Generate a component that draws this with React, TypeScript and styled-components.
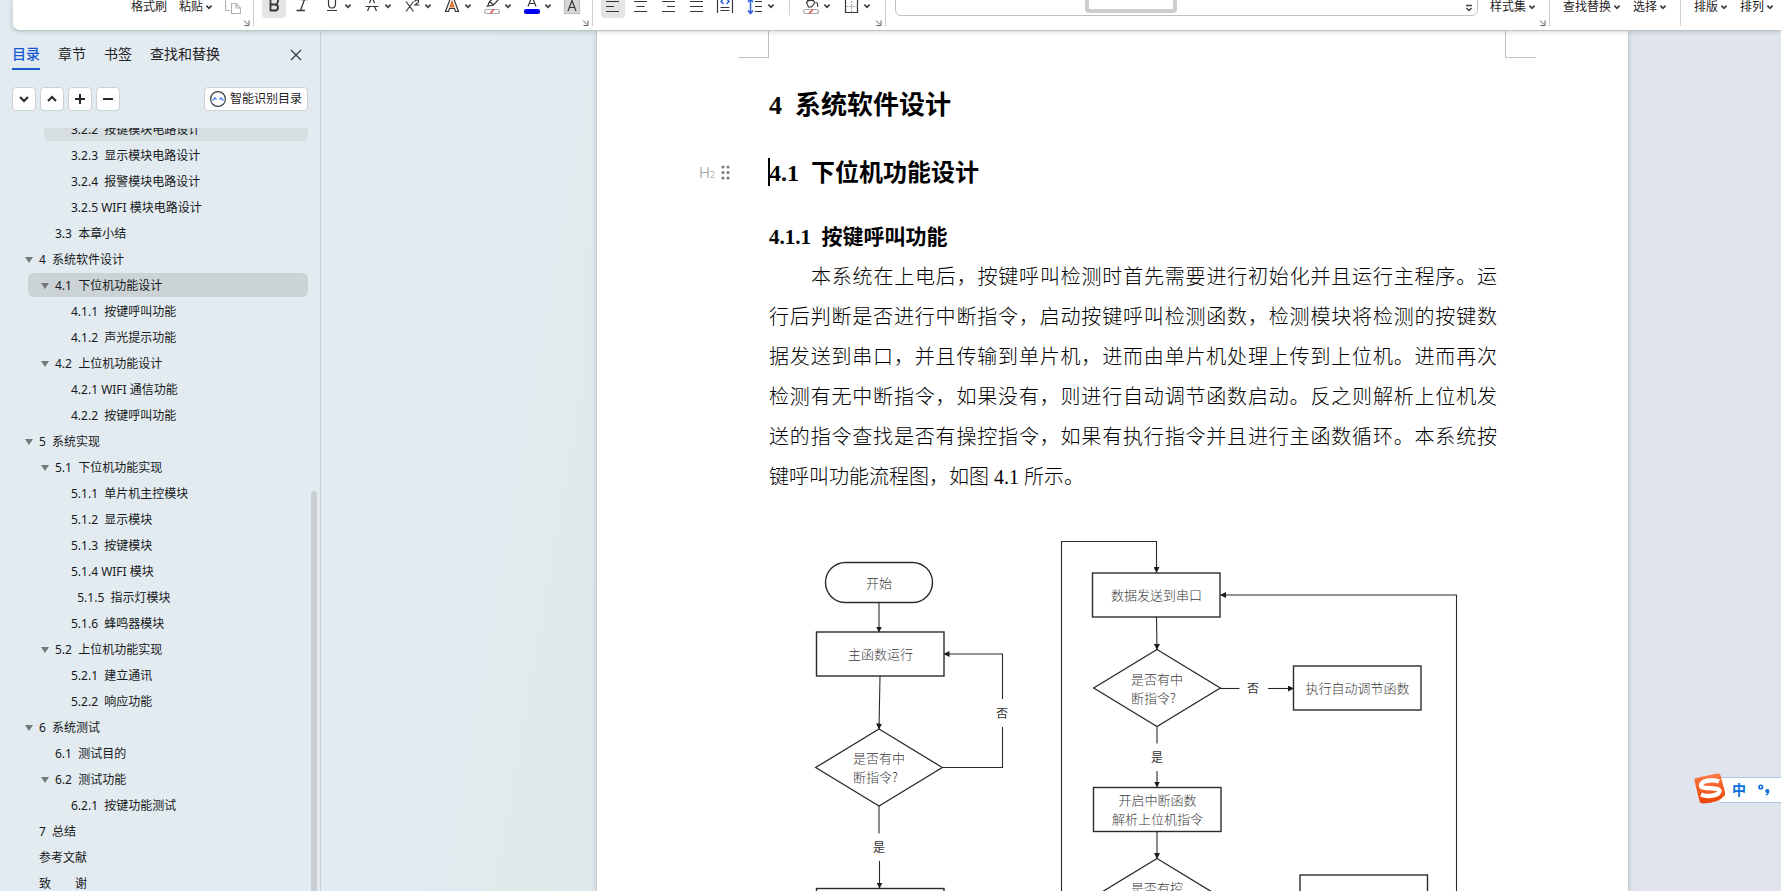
import React from "react";
import styled, { createGlobalStyle } from "styled-components";

const uiFont = `"Noto Sans", "Noto Sans CJK SC", sans-serif`;
const docFont = `"Liberation Serif", "Noto Sans CJK SC", serif`;

const GlobalStyle = createGlobalStyle`
  * { box-sizing: border-box; }
  body { margin: 0; overflow: hidden; }
  button { font-family: inherit; padding: 0; border: 0; background: none; color: inherit; }
`;

const Shell = styled.div`
  display: flex;
  flex-direction: column;
  height: 100vh;
  overflow: hidden;
  position: relative;
  font-family: ${uiFont};
  font-size: 12px;
  color: #1f2224;
  background: linear-gradient(100deg, #e2ebf0 0%, #e3ebf1 26%, #e0e9ec 34%, #e0e5ed 60%);
`;

/* ---------- ribbon ---------- */

const Ribbon = styled.header`
  display: flex;
  flex: none;
  height: 31px;
  margin-left: 12px;
  background: #fff;
  border-bottom: 1px solid #bcc5c9;
  border-left: 1px solid #d5dddf;
  border-bottom-left-radius: 8px;
  box-shadow: 0 1px 4px rgba(70, 90, 100, 0.25);
  position: relative;
  z-index: 2;
`;

const Group = styled.div<{ $left?: number; $right?: number; $grow?: boolean; $last?: boolean }>`
  display: flex;
  flex: ${(p) => (p.$grow ? "1" : "none")};
  height: 26px;
  position: relative;
  padding-left: ${(p) => p.$left ?? 8}px;
  padding-right: ${(p) => p.$right ?? 13}px;
  border-right: ${(p) => (p.$last ? "0" : "1px solid #cfd1d3")};
`;

const ToolRow = styled.div<{ $gap: number }>`
  display: flex;
  height: 25px;
  margin-top: -7px;
  gap: ${(p) => p.$gap}px;
`;

const ToolPair = styled.div<{ $gap: number }>`
  display: flex;
  gap: ${(p) => p.$gap}px;
`;

const Tool = styled.button<{ $on?: boolean }>`
  display: flex;
  align-items: center;
  height: 25px;
  border-radius: 4px;
  background: ${(p) => (p.$on ? "#e4e4e4" : "transparent")};
`;

const TextTool = styled(Tool)`
  gap: 2px;
  padding-top: 2px;
  font-size: 12px;
  line-height: 12px;
  white-space: nowrap;
`;

const Divider = styled.span`
  width: 1px;
  height: 22px;
  margin: 0 5px 0 10px;
  background: #cfd1d3;
`;

const LauncherButton = styled.button`
  position: absolute;
  right: 3px;
  bottom: 0;
  width: 7px;
  height: 6px;
  display: flex;
`;

const Gallery = styled.div`
  display: flex;
  flex: 1;
  height: 23px;
  margin: -7px 12px 0 0;
  padding: 0 4px 0 189px;
  justify-content: space-between;
  border: 1px solid #bfc2c4;
  border-radius: 0 0 6px 6px;
`;

const StyleCard = styled.button`
  width: 92px;
  height: 19px;
  border: 4px solid #cdcdcd;
  border-radius: 4px;
`;

const Icon = ({ children, w = 24 }: { children: React.ReactNode; w?: number }) => (
  <svg width={w} height={25} viewBox={`0 0 ${w} 25`} fill="none" stroke="#33373a" strokeWidth="1.2">
    {children}
  </svg>
);

const Chevron = () => (
  <svg width="8" height="25" viewBox="0 0 8 25" fill="none" stroke="#3c4043" strokeWidth="1.8">
    <path d="M1.4 11.7 4 14.3 6.6 11.7" />
  </svg>
);

const Launcher = ({ label }: { label: string }) => (
  <LauncherButton aria-label={label}>
    <svg width="7" height="6" viewBox="0 0 7 6" fill="none" stroke="#5d6164">
      <path d="M1 0.5 5 4.5M6 0.5V5.5H1.5" />
    </svg>
  </LauncherButton>
);

const Capsule = () => (
  <>
    <rect x="4.5" y="16.5" width="15" height="4" rx="2" stroke="#a9acae" fill="#fff" />
    <path d="M10 20.5 14 16.5" stroke="#e0433b" />
  </>
);

const fontTools: { label: string; icon: React.ReactNode }[] = [
  { label: "下划线", icon: <path d="M8.5 3v8.5a3.5 3.5 0 0 0 7 0V3M7 17.5h10" /> },
  { label: "删除线", icon: <path d="M5.5 13.5h13M9.5 10 12 3.5 14.5 10M9.5 13.5 7.5 18M14.5 13.5 16.5 18" /> },
  { label: "上标", icon: <path d="M6 8.5 13.500 18.500M13.500 8.500 6 18.500M15 8.500c.5-2.500 4-2 3.500 .3-.4 1.400-2.500 2.200-3.500 3.200h4.500" /> },
  {
    label: "文字效果",
    icon: (
      <>
        <path d="M5.5 18.5 10.5 5h3L18.5 18.5h-3L14.5 15.5h-5L8.5 18.5Z" />
        <path d="M12 8.5 10 14h4Z" fill="#f08a4b" stroke="#d9662a" />
      </>
    ),
  },
  {
    label: "突出显示",
    icon: (
      <>
        <path d="M7.500 13.500 9.500 8.500 14 5M9.500 8.500 13.500 12 18.500 6.500M6.500 13.500 13.500 12" />
        <Capsule />
      </>
    ),
  },
  {
    label: "字体颜色",
    icon: (
      <>
        <path d="M8 13.5 12 3.5 16 13.5M9 10.5h6" />
        <rect x="4" y="16" width="16" height="5" rx="2" fill="#0000f5" stroke="none" />
      </>
    ),
  },
];

const alignTools: { label: string; d: string; on?: boolean }[] = [
  { label: "左对齐", d: "M5 8.5h13M5 13.5h8M5 18.5h13", on: true },
  { label: "居中", d: "M5 8.5h13M7.5 13.5h8M5 18.5h13" },
  { label: "右对齐", d: "M5 8.5h13M10 13.5h8M5 18.5h13" },
  { label: "两端对齐", d: "M5 8.5h13M5 13.5h13M5 18.5h13" },
];

const TopBar = () => (
  <Ribbon>
    <Group $left={118} $right={12}>
      <ToolRow $gap={12}>
        <TextTool>格式刷</TextTool>
        <TextTool>
          粘贴
          <Chevron />
        </TextTool>
        <Tool aria-label="复制">
          <Icon w={16}>
            <g stroke="#b1b4b6">
              <path d="M5 17.5H.5V5M6 10.5h5l4.5 4.5v5.5H6.5V10.5M11 10.5V15h4.5" />
            </g>
          </Icon>
        </Tool>
      </ToolRow>
      <Launcher label="剪贴板选项" />
    </Group>

    <Group $right={8}>
      <ToolRow $gap={6}>
        <ToolPair $gap={4}>
          <Tool $on aria-label="加粗">
            <Icon>
              <path d="M8.500 4.500h4a3 3 0 0 1 0 7h-4ZM8.500 11.500h4.500a3 3 0 0 1 0 6h-4.500Z" strokeWidth="1.800" />
            </Icon>
          </Tool>
          <Tool aria-label="倾斜">
            <Icon>
              <path d="M10.5 6.5H18M6.5 17.5H15M14.5 6.5 10.5 17.5" strokeWidth="1.3" />
            </Icon>
          </Tool>
        </ToolPair>
        <ToolPair $gap={8}>
          {fontTools.map((t) => (
            <Tool key={t.label} aria-label={t.label}>
              <Icon>{t.icon}</Icon>
              <Chevron />
            </Tool>
          ))}
          <Tool aria-label="字符底纹">
            <Icon>
              <rect x="4.5" y="2.5" width="15" height="18" fill="#d6d6d6" stroke="#bdbdbd" />
              <path d="M8 18 12 7.5 16 18M9.5 14.500h5" />
            </Icon>
          </Tool>
        </ToolPair>
      </ToolRow>
      <Launcher label="字体选项" />
    </Group>

    <Group $right={14}>
      <ToolRow $gap={4}>
        {alignTools.map((t) => (
          <Tool key={t.label} $on={t.on} aria-label={t.label}>
            <Icon>
              <path d={t.d} />
            </Icon>
          </Tool>
        ))}
        <Tool aria-label="分散对齐">
          <Icon>
            <path d="M4.5 5v15M19.5 5v15M7.5 14.5h9M7.5 17.5h9" />
            <path d="M10.500 5.500 8 8.500 10.500 11M13.500 5.500 16 8.500 13.500 11" stroke="#2d5fe0" strokeWidth="1.5" />
          </Icon>
        </Tool>
        <Tool aria-label="行距">
          <Icon w={26}>
            <path d="M14 8.5h7M14 13.5h7M14 18.5h7" />
            <path d="M9.5 5v15M7 17.5 9.5 20.5 12 17.5M7 9 9.5 6 12 9" stroke="#2d5fe0" strokeWidth="1.5" />
          </Icon>
          <Chevron />
        </Tool>
        <Divider />
        <ToolPair $gap={8}>
          <Tool aria-label="底纹颜色">
            <Icon>
              <path d="M7.500 9.500 12 5.500 16 9.500 12.500 14H9.500ZM8 7.500h7M17.500 9c1.500 2 1.500 4.500 .5 4.500" />
              <Capsule />
            </Icon>
            <Chevron />
          </Tool>
          <Tool aria-label="边框">
            <Icon>
              <path d="M6.500 6.500h12v13h-12Z" />
              <path d="M12.500 8v11M7.500 13.500h11" stroke="#a5a8aa" strokeDasharray="2 1" />
            </Icon>
            <Chevron />
          </Tool>
        </ToolPair>
      </ToolRow>
      <Launcher label="段落选项" />
    </Group>

    <Group $grow $left={9}>
      <Gallery>
        <StyleCard aria-label="当前样式" />
        <Tool aria-label="更多样式">
          <svg width="8" height="25" viewBox="0 0 8 25" fill="none" stroke="#3c4043" strokeWidth="1.4">
            <path d="M1 11.5h6M1.5 14 4 16.5 6.5 14" />
          </svg>
        </Tool>
      </Gallery>
      <ToolRow $gap={12}>
        <TextTool>
          样式集
          <Chevron />
        </TextTool>
      </ToolRow>
      <Launcher label="样式选项" />
    </Group>

    <Group $left={13}>
      <ToolRow $gap={12}>
        {["查找替换", "选择"].map((t) => (
          <TextTool key={t}>
            {t}
            <Chevron />
          </TextTool>
        ))}
      </ToolRow>
    </Group>

    <Group $left={13} $right={7} $last>
      <ToolRow $gap={12}>
        {["排版", "排列"].map((t) => (
          <TextTool key={t}>
            {t}
            <Chevron />
          </TextTool>
        ))}
      </ToolRow>
    </Group>
  </Ribbon>
);

/* ---------- outline panel ---------- */

const Workspace = styled.main`
  display: flex;
  flex: 1;
  min-height: 0;
`;

const Panel = styled.aside`
  display: flex;
  flex-direction: column;
  flex: none;
  width: 321px;
  border-right: 1px solid #c6cdd1;
`;

const TabBar = styled.div`
  display: flex;
  align-items: flex-start;
  gap: 18px;
  height: 56px;
  padding: 11px 18px 0 12px;
`;

const Tab = styled.button<{ $on?: boolean }>`
  height: 28px;
  display: flex;
  align-items: flex-start;
  font-size: 14px;
  line-height: 24px;
  color: ${(p) => (p.$on ? "#1859d1" : "#1f2224")};
  font-weight: ${(p) => (p.$on ? 500 : 400)};
  border-bottom: ${(p) => (p.$on ? "2px solid #1859d1" : "0")};
`;

const CloseButton = styled.button`
  display: flex;
  margin: 7px 0 0 auto;
`;

const Actions = styled.div`
  display: flex;
  gap: 4px;
  padding: 0 12px;
  height: 41px;
`;

const SquareButton = styled.button`
  display: flex;
  align-items: center;
  justify-content: center;
  width: 24px;
  height: 24px;
  background: #fff;
  border: 1px solid #c9d2d5;
  border-radius: 4px;
`;

const SmartButton = styled(SquareButton)`
  width: 104px;
  margin-left: auto;
  gap: 4px;
  font-size: 12px;
  line-height: 20px;
  white-space: nowrap;
`;

const ListArea = styled.nav`
  flex: 1;
  min-height: 0;
  overflow: hidden;
  position: relative;
`;

const List = styled.ul`
  list-style: none;
  margin: -11px 12px 0;
  padding: 0;
  display: flex;
  flex-direction: column;
  gap: 2px;
`;

const Entry = styled.a<{ $level: number; $tone?: string }>`
  display: flex;
  align-items: center;
  height: 24px;
  margin-left: ${(p) => p.$level * 16}px;
  padding-top: 2px;
  border-radius: 6px;
  background: ${(p) => p.$tone ?? "transparent"};
  color: #17191b;
  text-decoration: none;
  white-space: pre;
  line-height: 22px;
`;

const Marker = styled.span`
  display: flex;
  justify-content: center;
  width: 27px;
  padding-left: 6px;
`;

const Thumb = styled.div`
  position: absolute;
  top: 363px;
  bottom: -20px;
  right: 3px;
  width: 6px;
  border-radius: 3px;
  background: #c9cfd2;
`;

type Row = { level: number; text: string; open?: boolean; tone?: string };

const rows: Row[] = [
  { level: 2, text: "3.2.2  按键模块电路设计", tone: "#d6dee1" },
  { level: 2, text: "3.2.3  显示模块电路设计" },
  { level: 2, text: "3.2.4  报警模块电路设计" },
  { level: 2, text: "3.2.5 WIFI 模块电路设计" },
  { level: 1, text: "3.3  本章小结" },
  { level: 0, text: "4  系统软件设计", open: true },
  { level: 1, text: "4.1  下位机功能设计", open: true, tone: "#cbd3d6" },
  { level: 2, text: "4.1.1  按键呼叫功能" },
  { level: 2, text: "4.1.2  声光提示功能" },
  { level: 1, text: "4.2  上位机功能设计", open: true },
  { level: 2, text: "4.2.1 WIFI 通信功能" },
  { level: 2, text: "4.2.2  按键呼叫功能" },
  { level: 0, text: "5  系统实现", open: true },
  { level: 1, text: "5.1  下位机功能实现", open: true },
  { level: 2, text: "5.1.1  单片机主控模块" },
  { level: 2, text: "5.1.2  显示模块" },
  { level: 2, text: "5.1.3  按键模块" },
  { level: 2, text: "5.1.4 WIFI 模块" },
  { level: 2, text: "  5.1.5  指示灯模块" },
  { level: 2, text: "5.1.6  蜂鸣器模块" },
  { level: 1, text: "5.2  上位机功能实现", open: true },
  { level: 2, text: "5.2.1  建立通讯" },
  { level: 2, text: "5.2.2  响应功能" },
  { level: 0, text: "6  系统测试", open: true },
  { level: 1, text: "6.1  测试目的" },
  { level: 1, text: "6.2  测试功能", open: true },
  { level: 2, text: "6.2.1  按键功能测试" },
  { level: 0, text: "7  总结" },
  { level: 0, text: "参考文献" },
  { level: 0, text: "致　　谢" },
];

const actionIcons = [
  { label: "展开", d: "M3 5 7 9 11 5" },
  { label: "收起", d: "M3 9 7 5 11 9" },
  { label: "提升级别", d: "M7 2v10M2 7h10" },
  { label: "降低级别", d: "M2 7h10" },
];

const OutlinePanel = () => (
  <Panel>
    <TabBar>
      <Tab $on>目录</Tab>
      <Tab>章节</Tab>
      <Tab>书签</Tab>
      <Tab>查找和替换</Tab>
      <CloseButton aria-label="关闭">
        <svg width="12" height="12" viewBox="0 0 12 12" stroke="#33373a" strokeWidth="1.2">
          <path d="M1 1 11 11M11 1 1 11" />
        </svg>
      </CloseButton>
    </TabBar>
    <Actions>
      {actionIcons.map((a) => (
        <SquareButton key={a.label} aria-label={a.label}>
          <svg width="14" height="14" viewBox="0 0 14 14" fill="none" stroke="#25282a" strokeWidth="2">
            <path d={a.d} />
          </svg>
        </SquareButton>
      ))}
      <SmartButton>
        <svg width="16" height="16" viewBox="0 0 16 16" fill="none">
          <circle cx="8" cy="8" r="7.4" stroke="#3a3e42" strokeWidth="1.2" />
          <path d="M2.5 9.5 5 7 6.5 8.5M9.5 8.5 11 7 13.5 9.5" stroke="#4a78f0" strokeWidth="1.3" />
        </svg>
        智能识别目录
      </SmartButton>
    </Actions>
    <ListArea aria-label="目录">
      <List>
        {rows.map((r, i) => (
          <li key={i}>
            <Entry href={`#s${i}`} $level={r.level} $tone={r.tone}>
              <Marker>
                {r.open && (
                  <svg width="8" height="6" viewBox="0 0 8 6">
                    <path d="M0 0h8L4 6Z" fill="#73787b" />
                  </svg>
                )}
              </Marker>
              {r.text}
            </Entry>
          </li>
        ))}
      </List>
      <Thumb />
    </ListArea>
  </Panel>
);

/* ---------- document ---------- */

const Canvas = styled.section`
  flex: 1;
  min-width: 0;
  overflow: hidden;
  display: grid;
  grid-template-columns: 275fr 1033px 152fr;
`;

const Sheet = styled.article`
  grid-column: 2;
  background: #fff;
  border: solid #c9cdd1;
  border-width: 0 1px;
  box-shadow: 0 0 5px rgba(90, 100, 115, 0.22);
  padding: 0 123px 0 172px;
  font-family: ${docFont};
  color: #000;
`;

const CropMarks = styled.div`
  display: flex;
  justify-content: space-between;
  height: 27px;
  margin: 0 -31px 0 -31px;
`;

const Mark = styled.span<{ $side: "left" | "right" }>`
  width: 31px;
  border-bottom: 1px solid #c2c2c2;
  border-right: ${(p) => (p.$side === "left" ? "1px solid #c2c2c2" : "0")};
  border-left: ${(p) => (p.$side === "right" ? "1px solid #c2c2c2" : "0")};
`;

const Heading = styled.h2<{ $size: number; $gap: number }>`
  margin: ${(p) => p.$gap}px 0 0;
  font-size: ${(p) => p.$size}px;
  line-height: 40px;
  font-weight: 700;
  white-space: pre;
  position: relative;
`;

const LevelTag = styled.button`
  position: absolute;
  left: -70px;
  top: 7px;
  display: flex;
  align-items: center;
  gap: 6px;
  height: 24px;
  font-family: ${uiFont};
  font-weight: 300;
  font-size: 15px;
  color: #8f8f8f;

  small { font-size: 9px; }
`;

const Caret = styled.span`
  position: absolute;
  left: -1px;
  top: 5px;
  width: 2px;
  height: 28px;
  background: #000;
`;

const Paragraph = styled.p`
  margin: 0;
  padding-right: 8px;
  font-size: 20px;
  line-height: 40px;
  font-weight: 300;
`;

const Line = styled.span<{ $indent?: boolean; $end?: boolean }>`
  display: block;
  white-space: nowrap;
  padding-left: ${(p) => (p.$indent ? "42px" : "0")};
  text-align: justify;
  text-align-last: ${(p) => (p.$end ? "left" : "justify")};
`;

const Figure = styled.figure`
  margin: 0 0 0 -1px;

  svg { display: block; }
  text { font-family: "Noto Sans CJK SC", sans-serif; font-size: 13px; font-weight: 300; fill: #3c3c3c; }
  text.branch { font-size: 12px; font-weight: 400; fill: #333; }
`;

const lines = [
  "本系统在上电后，按键呼叫检测时首先需要进行初始化并且运行主程序。运",
  "行后判断是否进行中断指令，启动按键呼叫检测函数，检测模块将检测的按键数",
  "据发送到串口，并且传输到单片机，进而由单片机处理上传到上位机。进而再次",
  "检测有无中断指令，如果没有，则进行自动调节函数启动。反之则解析上位机发",
  "送的指令查找是否有操控指令，如果有执行指令并且进行主函数循环。本系统按",
  "键呼叫功能流程图，如图 4.1 所示。",
];

const Box = ({ x, y, text }: { x: number; y: number; text: string[] }) => (
  <g>
    <rect x={x} y={y} width="127.5" height="44" strokeWidth="1.4" />
    {text.map((t, i) => (
      <text key={t} x={x + 64} y={y + 27 + (i - (text.length - 1) / 2) * 18.5} textAnchor="middle" stroke="none">
        {t}
      </text>
    ))}
  </g>
);

const Decision = ({ x, y, text }: { x: number; y: number; text: string[] }) => (
  <g>
    <path d={`M${x} ${y}l63.3 38.5-63.3 38.5-63.3-38.5Z`} strokeWidth="1.3" />
    {text.map((t, i) => (
      <text key={t} x={x - 26} y={y + 34 + i * 19} stroke="none">
        {t}
      </text>
    ))}
  </g>
);

const Flow = ({ d }: { d: string }) => <path d={d} markerEnd="url(#tip)" />;

const Branch = ({ x, y, children }: { x: number; y: number; children: string }) => (
  <text className="branch" x={x} y={y} textAnchor="middle" stroke="none">
    {children}
  </text>
);

const FlowChart = () => (
  <Figure>
    <svg width="737" height="394" viewBox="768 497 737 394" fill="none" stroke="#2b2b2b" strokeWidth="1.1">
      <defs>
        <marker id="tip" viewBox="0 0 6 6" refX="5.5" refY="3" markerWidth="6" markerHeight="6" markerUnits="userSpaceOnUse" orient="auto">
          <path d="M0 0 6 3 0 6Z" fill="#1c1c1c" stroke="none" />
        </marker>
      </defs>
      <rect x="825.5" y="562.5" width="107" height="40" rx="20" strokeWidth="1.4" />
      <text x="879" y="588" textAnchor="middle" stroke="none">开始</text>
      <Flow d="M879 603V632" />
      <Box x={816.5} y={632} text={["主函数运行"]} />
      <Flow d="M880 676 879 729" />
      <Decision x={879} y={729} text={["是否有中", "断指令?"]} />
      <path d="M942 767.5H1002.5V727" />
      <Flow d="M1002.5 699V654H944" />
      <Branch x={1002} y={718}>否</Branch>
      <path d="M879 806V833.5" />
      <Branch x={879} y={852}>是</Branch>
      <Flow d="M879.5 861V888" />
      <Box x={816.5} y={888.5} text={[]} />

      <Flow d="M1061.5 900V541.5H1156.5V572.5" />
      <Box x={1092.5} y={573} text={["数据发送到串口"]} />
      <Flow d="M1156.5 617 1157 649.5" />
      <Decision x={1157} y={649.5} text={["是否有中", "断指令?"]} />
      <path d="M1220 688.5H1239.5" />
      <Branch x={1253} y={693}>否</Branch>
      <Flow d="M1268 688.5H1293.5" />
      <Box x={1293.5} y={666} text={["执行自动调节函数"]} />
      <path d="M1157 727V743.5" />
      <Branch x={1157} y={762}>是</Branch>
      <Flow d="M1157 771V787" />
      <Box x={1093.5} y={787.5} text={["开启中断函数", "解析上位机指令"]} />
      <Flow d="M1157 832V858.5" />
      <Decision x={1157} y={858.5} text={["是否有控"]} />
      <Box x={1300} y={875} text={[]} />
      <Flow d="M1456.5 900V595H1220.5" />
    </svg>
  </Figure>
);

/* ---------- input method bar ---------- */

const ImeBar = styled.div`
  position: absolute;
  right: 0;
  top: 773px;
  z-index: 3;
  display: flex;
  align-items: center;
  width: 87px;
  height: 31px;
`;

const ImeBody = styled.div`
  display: flex;
  align-items: center;
  flex: 1;
  height: 26px;
  margin: 3px 0 0 -6px;
  padding-left: 12px;
  gap: 12px;
  background: #fff;
  border: solid #a9c8e6;
  border-width: 1px 0;
  color: #0a6fdc;
  font-size: 14px;
  font-weight: 700;
  line-height: 22px;
`;

const ImeLogo = styled.svg`
  flex: none;
  position: relative;
`;

export default function App() {
  return (
    <Shell>
      <GlobalStyle />
      <TopBar />
      <Workspace>
        <OutlinePanel />
        <Canvas>
          <Sheet>
            <CropMarks>
              <Mark $side="left" />
              <Mark $side="right" />
            </CropMarks>
            <Heading as="h1" $size={26} $gap={28}>{"4  系统软件设计"}</Heading>
            <Heading $size={24} $gap={27}>
              <LevelTag aria-label="二级标题">
                <span>H<small>2</small></span>
                <svg width="9" height="15" viewBox="0 0 9 15" fill="#777">
                  {[2, 7.5, 13].map((y) => (
                    <React.Fragment key={y}>
                      <circle cx="2" cy={y} r="1.5" />
                      <circle cx="7" cy={y} r="1.5" />
                    </React.Fragment>
                  ))}
                </svg>
              </LevelTag>
              <Caret />
              {"4.1  下位机功能设计"}
            </Heading>
            <Heading as="h3" $size={21} $gap={24}>{"4.1.1  按键呼叫功能"}</Heading>
            <Paragraph>
              {lines.map((l, i) => (
                <Line key={i} $indent={i === 0} $end={i === lines.length - 1}>
                  {l}
                </Line>
              ))}
            </Paragraph>
            <FlowChart />
          </Sheet>
        </Canvas>
      </Workspace>
      <ImeBar>
        <ImeLogo width="32" height="31" viewBox="0 0 32 31">
          <defs>
            <linearGradient id="ime" x1="0" y1="0" x2="0" y2="1">
              <stop offset="0" stopColor="#ff7a45" />
              <stop offset="1" stopColor="#ec4206" />
            </linearGradient>
          </defs>
          <path d="M2 5 23 0.5Q26 0 26.5 2L31 19Q31.5 22 30 23 25 30 9 30.5 6 30.5 5.5 28L.5 8Q0 5.5 2 5Z" fill="url(#ime)" />
          <path d="M25 8.5C18 5.5 7 8 7 12.5 7 17 25 13.5 25.5 18 25.5 22.5 14 24.5 7 21.5" fill="none" stroke="#fff" strokeWidth="4.5" />
        </ImeLogo>
        <ImeBody>
          <span>中</span>
          <svg width="12" height="12" viewBox="0 0 12 12" fill="none">
            <circle cx="2.8" cy="3" r="1.8" stroke="#0a6fdc" strokeWidth="1.6" />
            <circle cx="9.3" cy="7" r="2.1" fill="#0a6fdc" />
            <path d="M10.6 7.5Q10.4 10 8 11.2" stroke="#0a6fdc" strokeWidth="1.5" />
          </svg>
        </ImeBody>
      </ImeBar>
    </Shell>
  );
}
